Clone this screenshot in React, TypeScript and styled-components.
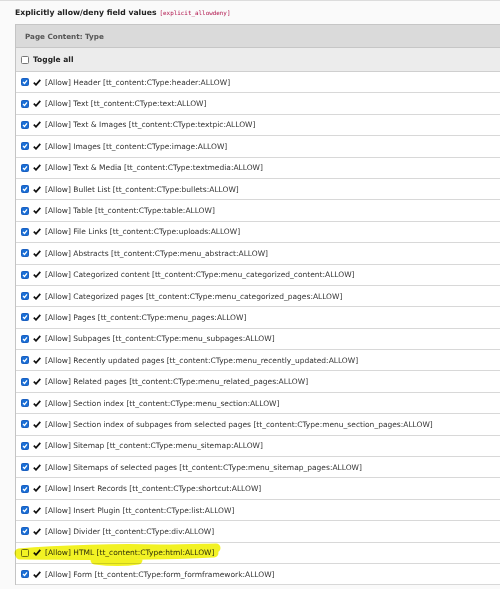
import React from 'react';
import styled, { createGlobalStyle } from 'styled-components';

const GlobalStyle = createGlobalStyle`
  html, body {
    margin: 0;
    padding: 0;
    background: #fafafa;
    overflow: hidden;
  }
  body {
    font-family: "DejaVu Sans", Verdana, sans-serif;
    color: #333;
  }
`;

const Page = styled.main`
  width: 500px;
  height: 589px;
  border-top: 1px solid #dcdcdc;
  box-sizing: border-box;
  padding-left: 15px;
  overflow: hidden;
  position: relative;
`;

const Title = styled.div`
  height: 23px;
  display: flex;
  align-items: center;
  gap: 3px;
  font-size: 7.7px;
  font-weight: bold;
  color: #222;
`;

const Code = styled.code`
  font-family: "DejaVu Sans Mono", monospace;
  font-size: 5.9px;
  font-weight: normal;
  color: #b0124a;
`;

const Panel = styled.section`
  border-left: 1px solid #c4c4c4;
  background: #fff;
`;

const PanelHeader = styled.div`
  height: 24px;
  box-sizing: border-box;
  background: #dadada;
  border-top: 1px solid #c6c6c6;
  border-bottom: 1px solid #c6c6c6;
  display: flex;
  align-items: center;
  padding-left: 9px;
  font-size: 7.2px;
  font-weight: bold;
  color: #555;
`;

const ToggleRow = styled.label`
  height: 24px;
  box-sizing: border-box;
  background: #ececec;
  border-bottom: 1px solid #cfcfcf;
  display: flex;
  align-items: center;
  padding-left: 5px;
  gap: 4px;
  font-size: 7.5px;
  font-weight: bold;
  color: #222;
`;

const Row = styled.label`
  height: 21.4px;
  box-sizing: border-box;
  border-bottom: 1px solid #d8d8d8;
  display: flex;
  align-items: center;
  padding-left: 5px;
  gap: 4px;
  font-size: 7.5px;
  color: #333;
  white-space: nowrap;
`;

const Box = styled.span<{ $checked?: boolean }>`
  width: 8px;
  height: 8px;
  box-sizing: border-box;
  border-radius: 1.5px;
  flex: none;
  display: flex;
  align-items: center;
  justify-content: center;
  background: ${(p) => (p.$checked ? '#1a6fd6' : '#fff')};
  border: 1px solid ${(p) => (p.$checked ? '#1a5fc0' : '#777')};
`;

const Tick = styled.span`
  flex: none;
  display: flex;
`;

const Highlight = styled.svg`
  position: absolute;
  left: 0;
  top: 538px;
  pointer-events: none;
  mix-blend-mode: multiply;
`;

const items: [string, string][] = [
  ['Header', 'header'],
  ['Text', 'text'],
  ['Text & Images', 'textpic'],
  ['Images', 'image'],
  ['Text & Media', 'textmedia'],
  ['Bullet List', 'bullets'],
  ['Table', 'table'],
  ['File Links', 'uploads'],
  ['Abstracts', 'menu_abstract'],
  ['Categorized content', 'menu_categorized_content'],
  ['Categorized pages', 'menu_categorized_pages'],
  ['Pages', 'menu_pages'],
  ['Subpages', 'menu_subpages'],
  ['Recently updated pages', 'menu_recently_updated'],
  ['Related pages', 'menu_related_pages'],
  ['Section index', 'menu_section'],
  ['Section index of subpages from selected pages', 'menu_section_pages'],
  ['Sitemap', 'menu_sitemap'],
  ['Sitemaps of selected pages', 'menu_sitemap_pages'],
  ['Insert Records', 'shortcut'],
  ['Insert Plugin', 'list'],
  ['Divider', 'div'],
  ['HTML', 'html'],
  ['Form', 'form_formframework'],
];

const CheckMark = () => (
  <svg width="8" height="7" viewBox="0 0 8 7">
    <path d="M0.8 3.6 L3 5.8 L7.3 0.9" fill="none" stroke="#111" strokeWidth="1.7" />
  </svg>
);

const BoxMark = () => (
  <svg width="6" height="6" viewBox="0 0 6 6">
    <path d="M1 3 L2.5 4.5 L5 1.4" fill="none" stroke="#fff" strokeWidth="1.2" />
  </svg>
);

const App: React.FC = () => {
  return (
    <Page>
      <GlobalStyle />
      <Title>
        Explicitly allow/deny field values <Code>[explicit_allowdeny]</Code>
      </Title>
      <Panel>
        <PanelHeader>Page Content: Type</PanelHeader>
        <ToggleRow>
          <Box />
          Toggle all
        </ToggleRow>
        {items.map(([label, key]) => {
          const checked = key !== 'html';
          return (
            <Row key={key}>
              <Box $checked={checked}>{checked && <BoxMark />}</Box>
              <Tick>
                <CheckMark />
              </Tick>
              [Allow] {label} [tt_content:CType:{key}:ALLOW]
            </Row>
          );
        })}
      </Panel>
      <Highlight width="240" height="30" viewBox="0 0 240 30">
        <path
          d="M19 14 C 60 10, 120 9, 160 10 C 190 10, 208 9, 216 9 M 20 16 C 70 16, 140 18, 214 14 M 95 21 C 110 23, 125 23, 138 21"
          fill="none"
          stroke="#f2f224"
          strokeWidth="9"
          strokeLinecap="round"
        />
      </Highlight>
    </Page>
  );
};

export default App;
